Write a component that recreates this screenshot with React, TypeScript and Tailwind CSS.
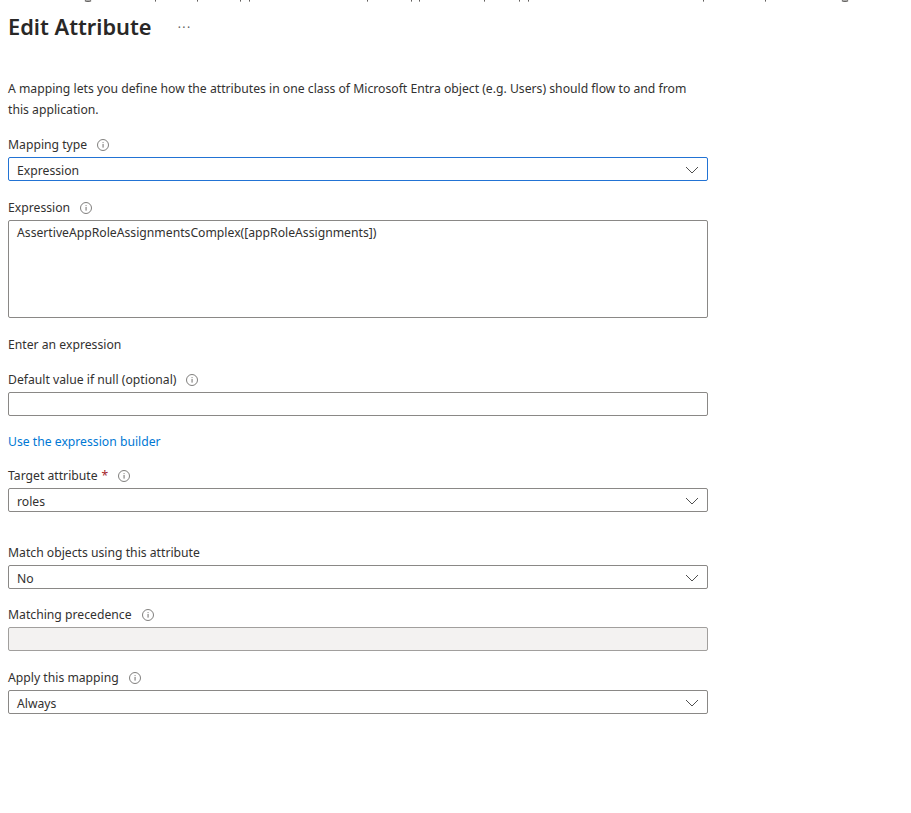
import React from 'react';

// bottoms of the letters of the line cut off by the top edge of the page
const cutOffMarks = [155, 197, 240, 249, 367, 411, 419, 484, 519, 528, 703, 765];

function CutOffLine() {
  return (
    <svg width="911" height="3" viewBox="0 0 911 3" className="block -ml-2">
      <path d="M85 0.5c1 1 5 1 6 0" stroke="#605e5c" strokeWidth="1.4" fill="none" />
      <path d="M842 0.5c1 1 5 1 6 0" stroke="#605e5c" strokeWidth="1.4" fill="none" />
      {cutOffMarks.map((x) => (
        <rect key={x} x={x} y="0" width="1" height="1.6" fill="#605e5c" />
      ))}
    </svg>
  );
}

function Info() {
  return (
    <svg width="12" height="12" viewBox="0 0 12 12" fill="none" className="shrink-0">
      <circle cx="6" cy="6" r="5.5" stroke="#605e5c" strokeWidth="0.8" />
      <rect x="5.6" y="5" width="0.9" height="3.6" fill="#605e5c" />
      <rect x="5.6" y="3.2" width="0.9" height="0.9" fill="#605e5c" />
    </svg>
  );
}

function Chevron() {
  return (
    <svg width="14" height="8" viewBox="0 0 14 8" fill="none" className="shrink-0 mt-[2px]">
      <path d="M1 1l6 6 6-6" stroke="#505050" strokeWidth="1" />
    </svg>
  );
}

function Label({ text, info = true, required = false, className = '' }: { text: string; info?: boolean; required?: boolean; className?: string }) {
  return (
    <div className={`flex items-center h-[17px] ${className}`}>
      <span>{text}</span>
      {required && <span className="text-[#a4262c] ml-1">*</span>}
      {info && (
        <span className="ml-[10px]">
          <Info />
        </span>
      )}
    </div>
  );
}

function Select({ value, focused = false }: { value: string; focused?: boolean }) {
  return (
    <div
      className={`flex items-center justify-between w-[700px] h-6 mt-[4px] pl-2 pr-[8px] rounded-[2px] border ${
        focused ? 'border-[#2273d4]' : 'border-[#8a8886]'
      }`}
    >
      <span className="pt-[2px]">{value}</span>
      <Chevron />
    </div>
  );
}

export default function App() {
  return (
    <div className="min-h-[813px] bg-white overflow-hidden pl-2 text-[12.2px] leading-[17px] text-[#323130] font-['Noto_Sans','Open_Sans',sans-serif]">
      <CutOffLine />

      {/* header */}
      <div className="flex items-center h-[51px] pb-1">
        <h1 className="text-[21.8px] font-semibold text-[#292827]">Edit Attribute</h1>
        <span className="ml-[26px] mt-[2px] text-[12px] tracking-[1.5px] text-[#605e5c]">···</span>
      </div>

      <p className="w-[700px] mt-[24px] leading-[21px]">
        A mapping lets you define how the attributes in one class of Microsoft Entra object (e.g. Users) should flow to and from this application.
      </p>

      <Label text="Mapping type" className="mt-[16px]" />
      <Select value="Expression" focused />

      <Label text="Expression" className="mt-[18px]" />
      <div className="w-[700px] h-[98px] mt-[4px] px-2 pt-[3px] rounded-[2px] border border-[#8a8886]">
        AssertiveAppRoleAssignmentsComplex([appRoleAssignments])
      </div>

      <p className="mt-[18px]">Enter an expression</p>

      <Label text="Default value if null (optional)" className="mt-[18px]" />
      <div className="w-[700px] h-6 mt-[4px] rounded-[2px] border border-[#8a8886]" />

      <p className="mt-[17px] text-[#0078d4]">Use the expression builder</p>

      <Label text="Target attribute" required className="mt-[17px]" />
      <Select value="roles" />

      <Label text="Match objects using this attribute" info={false} className="mt-[32px]" />
      <Select value="No" />

      <Label text="Matching precedence" className="mt-[17px]" />
      <div className="w-[700px] h-6 mt-[4px] rounded-[2px] border border-[#a19f9d] bg-[#f3f2f1]" />

      <Label text="Apply this mapping" className="mt-[18px]" />
      <Select value="Always" />
    </div>
  );
}
